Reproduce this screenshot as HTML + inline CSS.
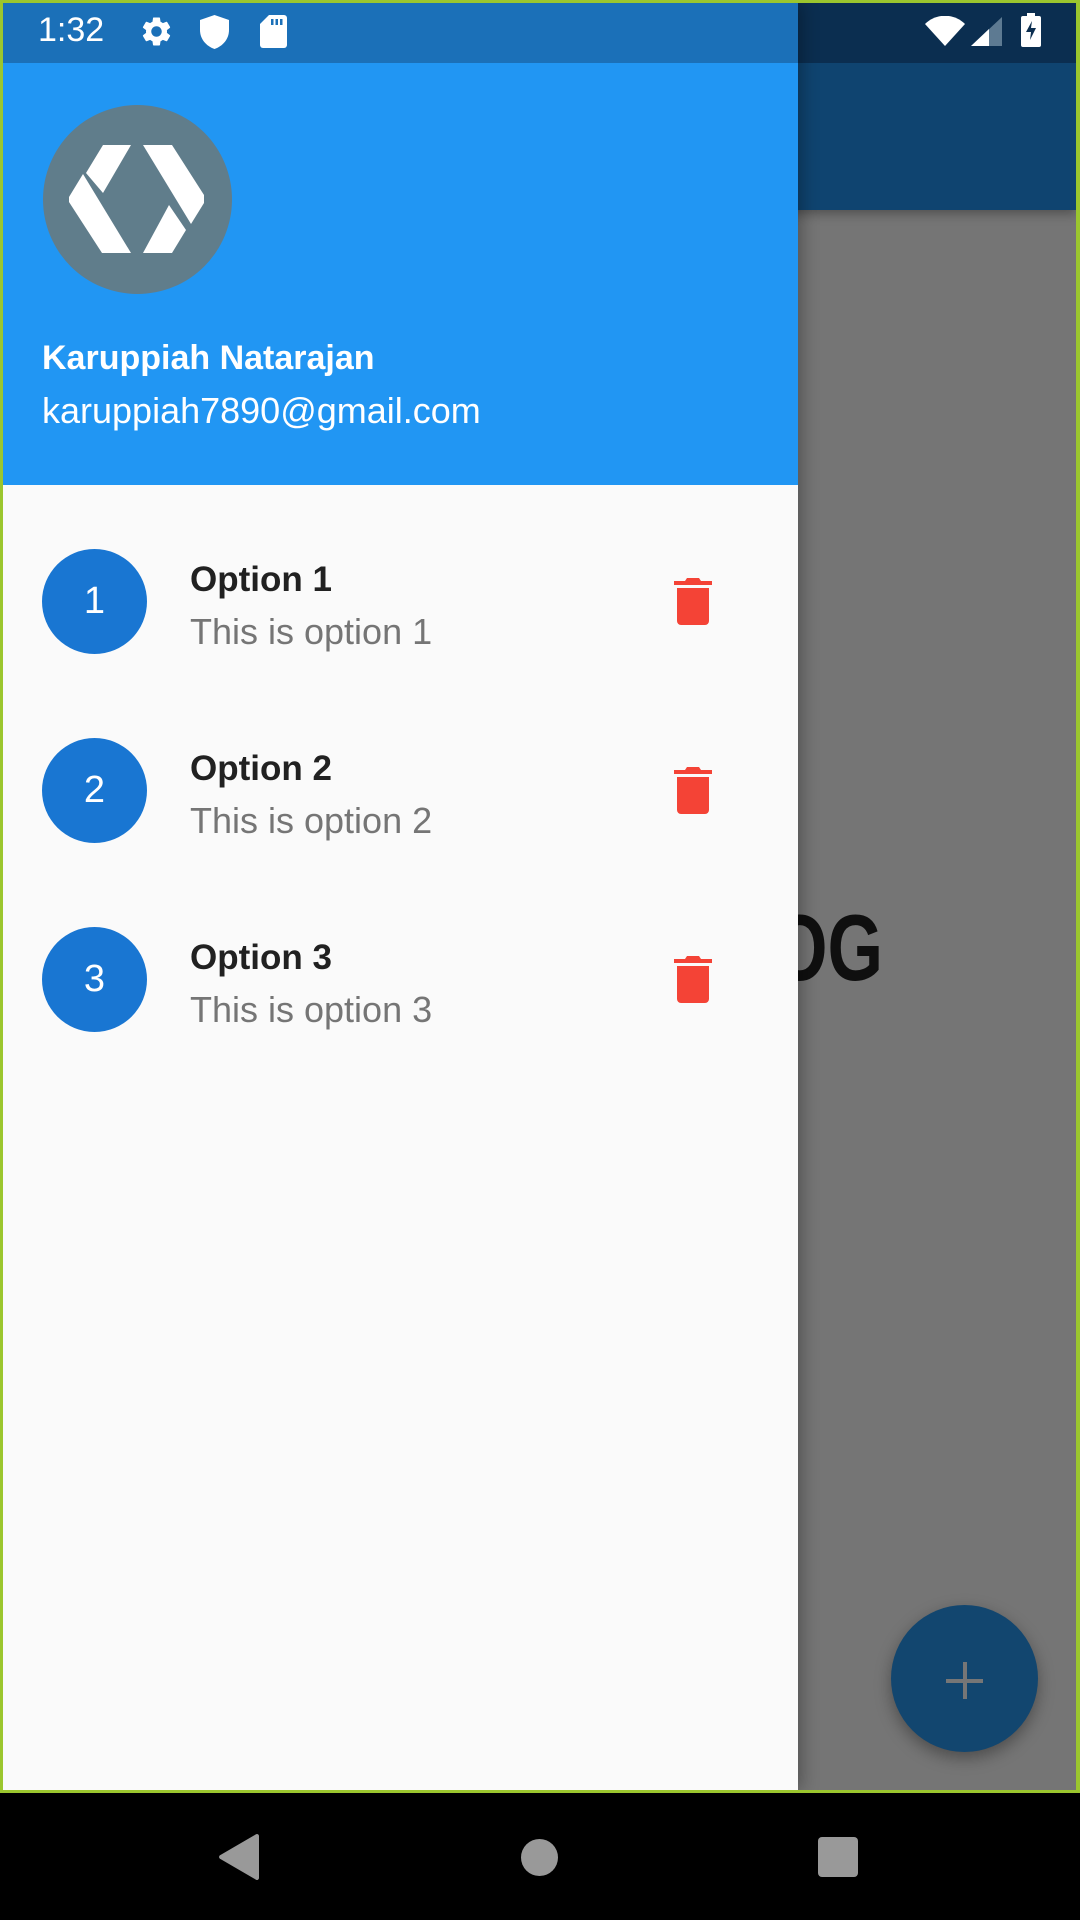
<!DOCTYPE html>
<html><head><meta charset="utf-8"><style>
html,body{margin:0;padding:0;}
body{width:1080px;height:1920px;position:relative;overflow:hidden;background:#000;font-family:"Liberation Sans",sans-serif;}
.abs{position:absolute;}
</style></head><body>
<div class="abs" style="left:0;top:0;width:1080px;height:1793px;background:#9bc62e;"></div>
<div class="abs" style="left:3px;top:3px;width:1073px;height:1787px;background:#757575;overflow:hidden;">
  <div class="abs" style="left:0;top:0;width:1073px;height:207px;background:#0f4470;box-shadow:0 4px 10px rgba(0,0,0,0.3);"></div>
  <div class="abs" style="left:0;top:0;width:1073px;height:60px;background:#0b2e50;"></div>
  <div class="abs" style="right:193px;top:898px;font-size:94px;font-weight:bold;color:#0f0f0f;line-height:1;transform:scaleX(0.76);transform-origin:right center;white-space:nowrap;">DOG</div>
  <div class="abs" style="left:888px;top:1602px;width:147px;height:147px;border-radius:50%;background:#12466f;box-shadow:0 6px 16px rgba(0,0,0,0.35);"></div>
  <div class="abs" style="left:943px;top:1676px;width:37px;height:4px;background:#767676;"></div>
  <div class="abs" style="left:960px;top:1659px;width:4px;height:37px;background:#767676;"></div>
  <div class="abs" style="left:0;top:0;width:795px;height:1787px;background:#fafafa;box-shadow:4px 0 16px rgba(0,0,0,0.3);">
    <div class="abs" style="left:0;top:0;width:795px;height:482px;background:#2196f3;"></div>
    <div class="abs" style="left:0;top:0;width:795px;height:60px;background:#1b70b8;"></div>
    <svg class="abs" style="left:40px;top:102px" width="189" height="189" viewBox="0 0 189 189">
      <circle cx="94.5" cy="94.5" r="94.5" fill="#607d8b"/>
      <polygon points="60,40 88,40 60,88 43,68" fill="#fff"/>
      <polygon points="40,69 26,92 26,97 59,148 88,148" fill="#fff"/>
      <polygon points="100,40 129,40 161,90 161,98 148,119" fill="#fff"/>
      <polygon points="126,100 143,125 129,148 100,148" fill="#fff"/>
    </svg>
    <div class="abs" style="left:39px;top:338px;font-size:34px;font-weight:bold;color:#fff;line-height:1;">Karuppiah Natarajan</div>
    <div class="abs" style="left:39px;top:390px;font-size:36px;color:#fff;line-height:1;">karuppiah7890@gmail.com</div>
  </div>
</div>
<div class="abs" style="left:42px;top:549px;width:105px;height:105px;border-radius:50%;background:#1976d2;color:#fff;font-size:38px;text-align:center;line-height:105px;">1</div>
<div class="abs" style="left:190px;top:562px;font-size:35px;font-weight:bold;color:#212121;line-height:1;">Option 1</div>
<div class="abs" style="left:190px;top:614px;font-size:36px;color:#757575;line-height:1;">This is option 1</div>
<div class="abs" style="left:42px;top:738px;width:105px;height:105px;border-radius:50%;background:#1976d2;color:#fff;font-size:38px;text-align:center;line-height:105px;">2</div>
<div class="abs" style="left:190px;top:751px;font-size:35px;font-weight:bold;color:#212121;line-height:1;">Option 2</div>
<div class="abs" style="left:190px;top:803px;font-size:36px;color:#757575;line-height:1;">This is option 2</div>
<div class="abs" style="left:42px;top:927px;width:105px;height:105px;border-radius:50%;background:#1976d2;color:#fff;font-size:38px;text-align:center;line-height:105px;">3</div>
<div class="abs" style="left:190px;top:940px;font-size:35px;font-weight:bold;color:#212121;line-height:1;">Option 3</div>
<div class="abs" style="left:190px;top:992px;font-size:36px;color:#757575;line-height:1;">This is option 3</div>
<svg class="abs" style="left:674px;top:578px" width="38" height="47" viewBox="0 0 38 47"><path d="M13 0h12l2 3h11v4H0V3h11z M3 10h32v33a4 4 0 0 1-4 4H7a4 4 0 0 1-4-4z" fill="#f44336"/></svg>
<svg class="abs" style="left:674px;top:767px" width="38" height="47" viewBox="0 0 38 47"><path d="M13 0h12l2 3h11v4H0V3h11z M3 10h32v33a4 4 0 0 1-4 4H7a4 4 0 0 1-4-4z" fill="#f44336"/></svg>
<svg class="abs" style="left:674px;top:956px" width="38" height="47" viewBox="0 0 38 47"><path d="M13 0h12l2 3h11v4H0V3h11z M3 10h32v33a4 4 0 0 1-4 4H7a4 4 0 0 1-4-4z" fill="#f44336"/></svg>
<div class="abs" style="left:38px;top:13px;font-size:34px;color:#fff;line-height:1;">1:32</div>
<svg class="abs" style="left:139px;top:14px" width="35" height="35" viewBox="0 0 24 24"><path fill="#fff" d="M19.14 12.94c.04-.3.06-.61.06-.94 0-.32-.02-.64-.07-.94l2.030-1.58a.49.49 0 0 0 .12-.61l-1.92-3.32a.488.488 0 0 0-.59-.22l-2.39.96c-.5-.38-1.03-.7-1.62-.94l-.36-2.54a.484.484 0 0 0-.48-.41h-3.84c-.24 0-.43.17-.47.41l-.36 2.54c-.59.24-1.130.57-1.62.94l-2.39-.96c-.22-.08-.47 0-.59.22L2.74 8.87c-.12.21-.08.47.12.61l2.03 1.58c-.05.3-.09.63-.09.94s.02.64.07.94l-2.030 1.58a.49.49 0 0 0-.12.61l1.92 3.32c.12.22.37.29.59.22l2.39-.96c.5.38 1.03.7 1.62.94l.36 2.54c.05.24.24.41.48.41h3.84c.24 0 .44-.17.47-.41l.36-2.54c.59-.24 1.13-.56 1.62-.94l2.39.96c.22.08.47 0 .59-.22l1.92-3.32c.12-.22.07-.47-.12-.61l-2.01-1.58zM12 15.6c-1.98 0-3.6-1.62-3.6-3.6s1.62-3.6 3.6-3.6 3.6 1.62 3.6 3.6-1.62 3.6-3.6 3.6z"/></svg>
<svg class="abs" style="left:200px;top:15px" width="29" height="34" viewBox="0 0 29 34"><path fill="#fff" d="M14.5 0L0 5v10c0 9 6 16 14.5 19C23 31 29 24 29 15V5z"/></svg>
<svg class="abs" style="left:260px;top:15px" width="27" height="33" viewBox="0 0 27 33"><path fill="#fff" d="M9 0h15a3 3 0 0 1 3 3v27a3 3 0 0 1-3 3H3a3 3 0 0 1-3-3V9z"/><rect x="11" y="4" width="2.5" height="6" fill="#1b70b8"/><rect x="15.5" y="4" width="2.5" height="6" fill="#1b70b8"/><rect x="20" y="4" width="2.5" height="6" fill="#1b70b8"/></svg>
<svg class="abs" style="left:925px;top:16px" width="40" height="30" viewBox="0 0 40 30"><path fill="#fff" d="M0 8C11-3 29-3 40 8L20 30z"/></svg>
<svg class="abs" style="left:971px;top:17px" width="31" height="29" viewBox="0 0 31 29"><path fill="#5d7a92" d="M31 0V29H0z"/><path fill="#fff" d="M18 12V29H0z"/></svg>
<svg class="abs" style="left:1021px;top:13px" width="20" height="34" viewBox="0 0 20 34"><path fill="#fff" d="M6 0h8v3h4a2 2 0 0 1 2 2v27a2 2 0 0 1-2 2H2a2 2 0 0 1-2-2V5a2 2 0 0 1 2-2h4z"/><path fill="#0b2e50" d="M11 8L5 19h5l-1 8 6-12h-5z"/></svg>
<svg class="abs" style="left:218px;top:1834px" width="42" height="46" viewBox="0 0 42 46"><path fill="#999" d="M41 2v42a2 2 0 0 1-3 1.7L2 24.7a2 2 0 0 1 0-3.4L38 .3A2 2 0 0 1 41 2z"/></svg>
<div class="abs" style="left:521px;top:1839px;width:37px;height:37px;border-radius:50%;background:#999;"></div>
<div class="abs" style="left:818px;top:1837px;width:40px;height:40px;border-radius:4px;background:#999;"></div>
</body></html>
